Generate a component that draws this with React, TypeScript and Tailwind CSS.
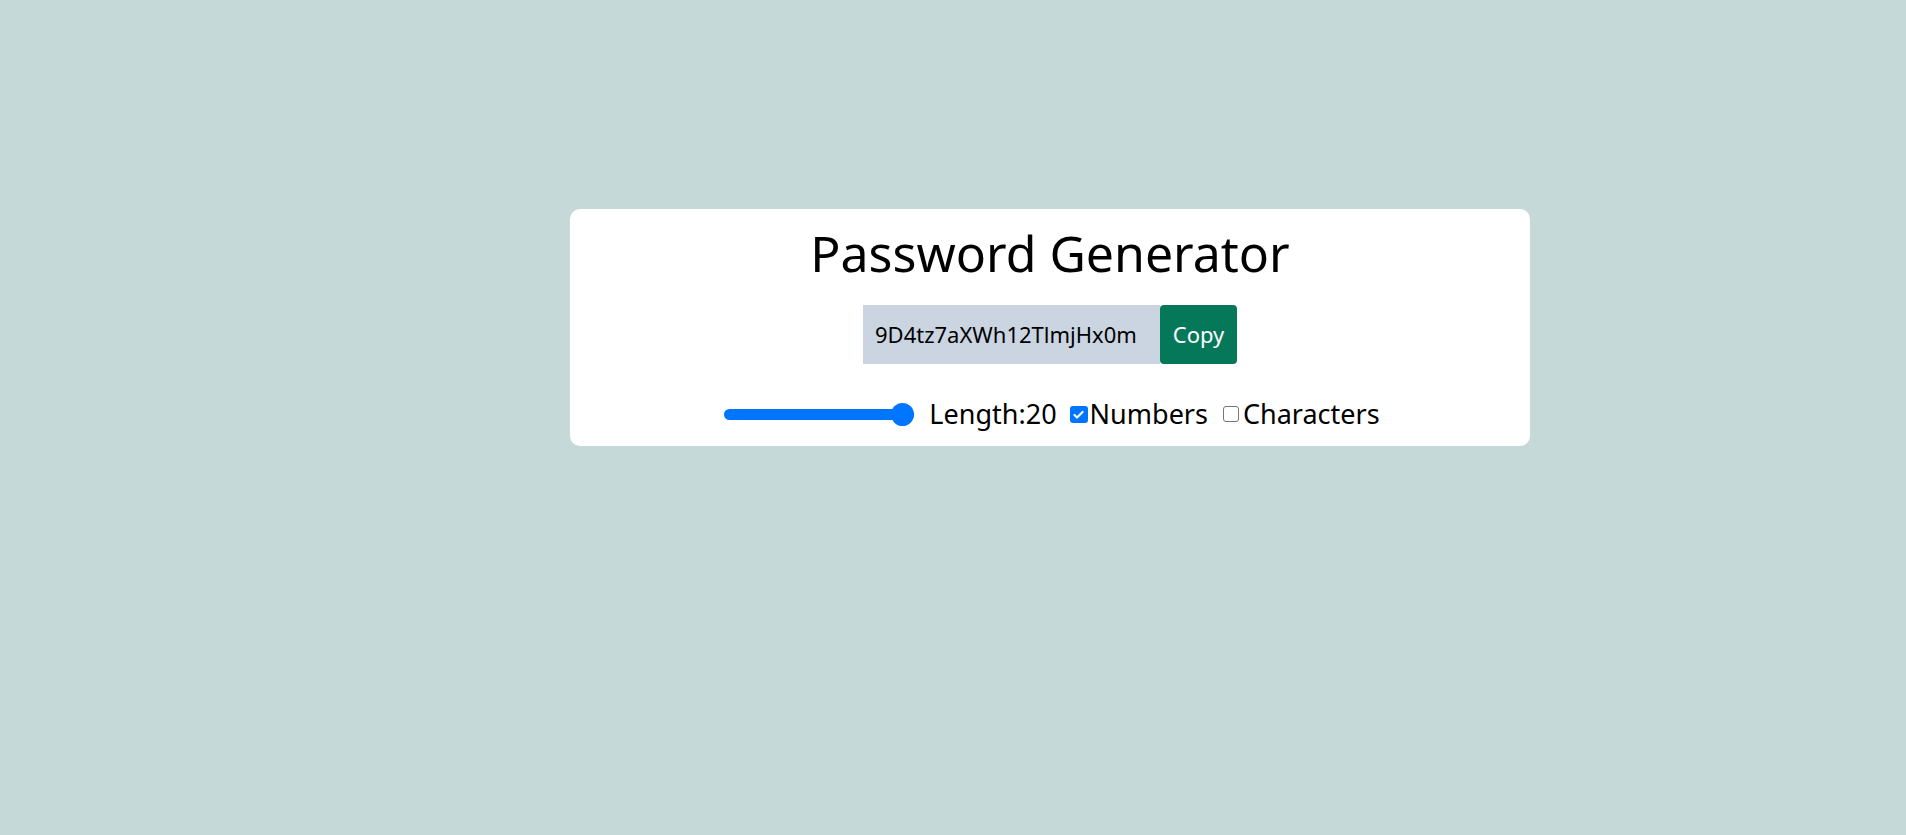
import { useState } from 'react';

function Checkbox({ checked }: { checked: boolean }) {
  if (checked) {
    return (
      <span className="flex h-[17px] w-[18px] items-center justify-center rounded-[3px] bg-[#0075ff]">
        <svg viewBox="0 0 16 16" className="h-[13px] w-[13px]" fill="none">
          <path d="M3 8.5l3.2 3.2L13 4.8" stroke="white" strokeWidth="2.6" strokeLinecap="round" strokeLinejoin="round" />
        </svg>
      </span>
    );
  }
  return <span className="block h-[16px] w-[16px] rounded-[3px] border-[1.5px] border-[#767676] bg-white" />;
}

export default function App() {
  const [length] = useState(20);
  const [numbers] = useState(true);
  const [chars] = useState(false);
  const password = '9D4tz7aXWh12TlmjHx0m';

  return (
    <div className="min-h-[835px] w-full bg-[#c6d9d9] pt-[209px] font-['Noto_Sans',sans-serif] text-black">
      <div className="ml-[570px] flex h-[237px] w-[960px] flex-col items-center rounded-[10px] bg-white pt-[14px]">
        <h1 className="text-[50px] leading-[60px]">Password Generator</h1>

        <div className="mt-[22px] flex h-[59px]">
          <div className="flex w-[297px] items-center bg-[#cbd5e1] pl-[12px] text-[22px]">{password}</div>
          <button className="w-[77px] rounded-[4px] bg-[#06785a] text-[22px] text-white">Copy</button>
        </div>

        <div className="ml-[4px] mt-[33px] flex items-center text-[27px] leading-[34px]">
          <div className="relative h-[23px] w-[190px]">
            <div className="absolute left-0 right-0 top-[6px] h-[11px] rounded-full bg-[#0075ff]" />
            <div className="absolute right-0 top-0 h-[23px] w-[23px] rounded-full bg-[#0075ff]" />
          </div>
          <span className="ml-[15px]">Length:{length}</span>
          <span className="ml-[13px]">
            <Checkbox checked={numbers} />
          </span>
          <span className="ml-[2px]">Numbers</span>
          <span className="ml-[15px]">
            <Checkbox checked={chars} />
          </span>
          <span className="ml-[4px]">Characters</span>
        </div>
      </div>
    </div>
  );
}
